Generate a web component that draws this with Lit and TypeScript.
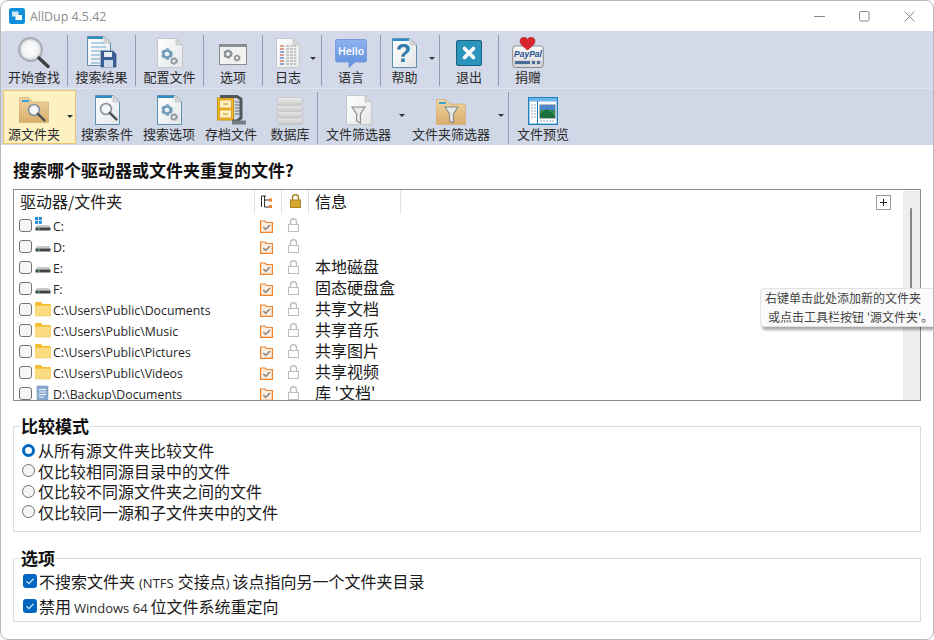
import { LitElement, html, css, svg } from "lit";
import { customElement } from "lit/decorators.js";

const gear = (x: number, y: number, r: number, c: string) => svg`
  <circle cx=${x} cy=${y} r=${r * 0.72} fill="none" stroke=${c} stroke-width=${r * 0.5}/>
  <circle cx=${x} cy=${y} r=${r} fill="none" stroke=${c} stroke-width=${r * 0.28} stroke-dasharray=${`${r * 0.6} ${r * 0.5}`}/>`;

const docBody = (w: number, h: number, top = true) => svg`
  <path d="M.5 .5H${w - 7}L${w - .5} 7V${h - .5}H.5Z" fill="url(#doc)" stroke=${top ? "#5f8fb0" : "#c8c8c8"}/>
  <path d="M${w - 7} .5V7H${w - .5}Z" fill="#d9d9d9" stroke="#bbb" stroke-width=".6"/>
  ${top ? svg`<rect x="1" y="1" width=${w - 9} height="2" fill="#2f8fc4"/>` : ""}`;

const glass = (x: number, y: number, r: number) => svg`
  <circle cx=${x} cy=${y} r=${r} fill="url(#lens)" stroke="#8a949c" stroke-width="1.6"/>
  <path d="M${x + r * .7} ${y + r * .7}L${x + r * 1.9} ${y + r * 1.9}" stroke="#4a4f55" stroke-width="2.4" stroke-linecap="round"/>`;

const folderTan = () => svg`
  <path d="M0 1.5Q0 .5 1 .5H10L14 5H29.5V25.5H0Z" fill="url(#tan)" stroke="#c9a670" stroke-width=".6"/>
  <rect x="3" y="3" width="7" height="2" fill="#3aa0d8"/>`;

const funnel = (x: number, y: number) => svg`
  <path d="M${x} ${y}H${x + 13}L${x + 8.4} ${y + 7}V${y + 16}L${x + 4.6} ${y + 14}V${y + 7}Z" fill="#e9e9e9" stroke="#8a8a86" stroke-width="1.1"/>`;

const ICONS: Record<string, any> = {
  start: html`<svg width="32" height="31" viewBox="0 0 32 31">
    <circle cx="12.5" cy="12.5" r="11.5" fill="url(#lens)" stroke="#a8adb2" stroke-width="2"/>
    <path d="M21 21L30 29.5" stroke="#3d3f42" stroke-width="3.4" stroke-linecap="round"/></svg>`,
  results: html`<svg width="30" height="32" viewBox="0 0 30 32">
    <g>${docBody(24, 30)}</g>
    <path d="M4 7H17M4 11H19M4 15H19M4 19H13M4 23H13M4 27H13" stroke="#6aa9d3" stroke-width="1.2"/>
    <path d="M14 15H26L29 18V31H14Z" fill="#3a5f96" stroke="#28446e" stroke-width=".6"/>
    <rect x="17" y="16" width="8" height="5" fill="#e9eef5"/><rect x="17" y="24" width="9" height="7" fill="#cdd9ea"/></svg>`,
  config: html`<svg width="26" height="30" viewBox="0 0 26 30">
    <g>${docBody(26, 30, false)}</g>${gear(10, 16, 5, "#6d9dbb")}${gear(17, 23, 3.4, "#8f9aa3")}</svg>`,
  options: html`<svg width="28" height="21" viewBox="0 0 28 21">
    <rect x=".5" y=".5" width="27" height="20" fill="#f1f1f1" stroke="#8c8c8c"/>
    <rect x="1" y="1" width="26" height="2" fill="#8c9096"/>${gear(9, 10, 4, "#8a8f93")}${gear(18, 14, 3, "#8a8f93")}</svg>`,
  log: html`<svg width="24" height="30" viewBox="0 0 24 30">
    <g>${docBody(24, 30, false)}</g>
    <path d="M4 8H8M4 11H8M4 17H8M4 23H8" stroke="#c8402a" stroke-width="1.2"/>
    <path d="M4 14H8M4 20H8M4 26H8" stroke="#2c5aa8" stroke-width="1.2"/>
    <path d="M10 8H20M10 11H20M10 14H20M10 17H20M10 20H20M10 23H20M10 26H20" stroke="#9a9a9a" stroke-width="1.2" stroke-dasharray="3 1"/></svg>`,
  hello: html`<svg width="32" height="29" viewBox="0 0 32 29">
    <path d="M2 .5H30Q31.500 .5 31.500 2V21Q31.500 23 30 23H20L14 28.500V23H2Q.5 23 .5 21V2Q.5 .5 2 .5Z" fill="url(#hello)" stroke="#7a9fd8"/>
    <text class="hello" x="16" y="16" text-anchor="middle">Hello</text></svg>`,
  help: html`<svg width="25" height="30" viewBox="0 0 25 30">
    <g>${docBody(25, 30)}</g><text class="qm" x="11.500" y="24" text-anchor="middle">?</text></svg>`,
  exit: html`<svg width="26" height="26" viewBox="0 0 26 26">
    <rect x=".5" y=".5" width="25" height="25" rx="1.5" fill="#2b94bd" stroke="#1b5f7e"/>
    <path d="M8.500 8.500L17.500 17.500M17.500 8.500L8.500 17.500" stroke="#fff" stroke-width="3.600" stroke-linecap="round"/></svg>`,
  paypal: html`<svg width="32" height="31" viewBox="0 0 32 31">
    <rect x=".7" y="9" width="30.600" height="21.500" rx="3" fill="url(#pp)" stroke="#8b8b8b"/>
    <rect x="2" y="23.500" width="28" height="4.500" fill="#d0d2d6"/>
    <rect x="3" y="24" width="15" height="3" fill="#4a6d96"/><rect x="20" y="24" width="3" height="3" fill="#4a6d96"/><rect x="25" y="24" width="3" height="3" fill="#4a6d96"/>
    <text class="pp" x="16" y="20" text-anchor="middle">PayPal</text>
    <path d="M14.500 13C10 9.500 7 7 7 4C7 1.500 9 .3 11 .3C12.500 .3 14 1.200 14.500 2.500C15 1.200 16.500 .3 18 .3C20 .3 22 1.500 22 4C22 7 19 9.500 14.500 13Z" fill="#d9232c" stroke="#9f1a20" stroke-width=".5" transform="translate(1 0)"/></svg>`,
  source: html`<svg width="31" height="28" viewBox="0 0 31 28">
    <g>${folderTan()}</g>${glass(15, 13, 5.500)}</svg>`,
  cond: html`<svg width="25" height="30" viewBox="0 0 25 30">
    <g>${docBody(25, 30)}</g>${glass(11, 14, 5.500)}</svg>`,
  searchopt: html`<svg width="25" height="30" viewBox="0 0 25 30">
    <g>${docBody(25, 30)}</g>${gear(10, 15, 5, "#6d9dbb")}${gear(17, 22, 3.400, "#8f9aa3")}</svg>`,
  archive: html`<svg width="29" height="31" viewBox="0 0 29 31">
    <rect x=".5" y="4" width="16" height="22" fill="#f6bf2a" stroke="#c98b10"/>
    <rect x="2.500" y="6" width="12" height="8" fill="#fdf1c4" stroke="#c98b10" stroke-width=".7"/>
    <rect x="2.500" y="16" width="12" height="8" fill="#fdf1c4" stroke="#c98b10" stroke-width=".7"/>
    <path d="M6 10H11M6 20H11" stroke="#c98b10" stroke-width="1.200"/>
    <path d="M3 2.500H20L24 5V24L20 27H15" fill="none" stroke="#50565c" stroke-width="3"/>
    <path d="M18 8H23M18 11H23M18 14H23M18 17H23M18 20H23" stroke="#6c6c6c"/>
    <rect x="15" y="26.500" width="14" height="4" fill="#777d83"/></svg>`,
  db: html`<svg width="26" height="28" viewBox="0 0 26 28">
    <g fill="url(#db)" stroke="#bfbfbf" stroke-width=".7">
      <rect x=".5" y="19.500" width="25" height="8" rx="3"/><rect x=".5" y="13" width="25" height="8" rx="3"/>
      <rect x=".5" y="6.500" width="25" height="8" rx="3"/><rect x=".5" y=".5" width="25" height="8" rx="3"/></g></svg>`,
  filefilter: html`<svg width="26" height="30" viewBox="0 0 26 30">
    <g>${docBody(26, 30, false)}</g>${funnel(6, 12)}</svg>`,
  folderfilter: html`<svg width="30" height="26" viewBox="0 0 30 26">
    <g>${folderTan()}</g>${funnel(9, 8)}</svg>`,
  preview: html`<svg width="30" height="28" viewBox="0 0 30 28">
    <rect x=".7" y=".7" width="28.600" height="26.600" fill="#fff" stroke="#1f7fc0" stroke-width="1.400"/>
    <rect x="1" y="1" width="28" height="3.500" fill="#6db7e6"/>
    <path d="M9.500 4V27" stroke="#1f7fc0"/>
    <path d="M3 8H8M3 11H8M3 14H8M3 17H8M3 20H8" stroke="#8aa7bd" stroke-dasharray="2 1"/>
    <rect x="12" y="8" width="15" height="13" fill="#2a8f4f" stroke="#777"/>
    <rect x="12" y="8" width="15" height="5" fill="#4a86c8"/>
    <path d="M12 17L19 12L27 19V21H12Z" fill="#1c6e3a"/>
    <path d="M12 24H27" stroke="#8aa7bd" stroke-dasharray="2 1"/></svg>`,
};

const driveIcon = (win = false) => html`<svg class="ri" width="16" height="18" viewBox="0 0 16 18">
  ${win ? svg`<g fill="#1e88d8"><rect x="0" y="0" width="3" height="3"/><rect x="3.800" y="0" width="3" height="3"/><rect x="0" y="3.800" width="3" height="3"/><rect x="3.800" y="3.800" width="3" height="3"/></g>` : ""}
  <path d="M2 8H14L15.500 10.500H.5Z" fill="#c9c9c9"/><rect x=".5" y="10.500" width="15" height="3" fill="#3f4448"/><rect x="3" y="11.500" width="2" height="1" fill="#5fd35f"/></svg>`;

const folderIcon = html`<svg class="ri" width="16" height="18" viewBox="0 0 16 18">
  <path d="M0 2.500Q0 1 1 1H6L7.500 3H15.500V15H0Z" fill="#f5bd2e"/><rect x="0" y="4.500" width="16" height="10.500" fill="#fbdc80" stroke="#f0c245" stroke-width=".5"/></svg>`;

const libIcon = html`<svg class="ri" width="16" height="18" viewBox="0 0 16 18">
  <rect x="2" y="1" width="11" height="14" fill="#8aa9cf" stroke="#7593b8" stroke-width=".5"/><path d="M4 4.500H11M4 7H11M4 9.500H11M4 12H9" stroke="#eef3fa"/></svg>`;

const orangeCheck = html`<svg class="oc" width="13" height="13" viewBox="0 0 13 13">
  <path d="M.6 1H5L6.500 2.500H12.400V12.400H.6Z" fill="#fbeee2" stroke="#f0822a" stroke-width="1.200"/><path d="M3.300 7L5.700 9.400L10 5" fill="none" stroke="#948a82" stroke-width="1.700"/></svg>`;

const grayLock = html`<svg class="lk" width="11" height="14" viewBox="0 0 11 14">
  <path d="M2.500 6.500V3.500Q2.500 .7 5.500 .7T8.500 3.500V6.500" fill="none" stroke="#bdbdbd" stroke-width="1.400"/><rect x=".5" y="6.500" width="10" height="7" fill="#fff" stroke="#bdbdbd"/></svg>`;

const TOP = [
  { k: "start", t: "开始查找", w: 67 },
  { k: "results", t: "搜索结果", w: 68 },
  { k: "config", t: "配置文件", w: 68 },
  { k: "options", t: "选项", w: 59, mb: 3 },
  { k: "log", t: "日志", w: 59, ar: 5, pr: 8 },
  { k: "hello", t: "语言", w: 59 },
  { k: "help", t: "帮助", w: 59, ar: 4, pr: 11 },
  { k: "exit", t: "退出", w: 59, mb: 2 },
  { k: "paypal", t: "捐赠", w: 58, nosep: true },
];
const BOTTOM = [
  { k: "source", t: "源文件夹", w: 73, active: true, ar: 2, pr: 11, nosep: true },
  { k: "cond", t: "搜索条件", w: 62, nosep: true },
  { k: "searchopt", t: "搜索选项", w: 62, nosep: true },
  { k: "archive", t: "存档文件", w: 62, nosep: true },
  { k: "db", t: "数据库", w: 56 },
  { k: "filefilter", t: "文件筛选器", w: 92, ar: 5, pr: 11, nosep: true },
  { k: "folderfilter", t: "文件夹筛选器", w: 99, ar: 5, pr: 17 },
  { k: "preview", t: "文件预览", w: 68, nosep: true },
];
const ROWS = [
  { p: "C:", i: driveIcon(true), n: "" },
  { p: "D:", i: driveIcon(), n: "" },
  { p: "E:", i: driveIcon(), n: "本地磁盘" },
  { p: "F:", i: driveIcon(), n: "固态硬盘盒" },
  { p: "C:\\Users\\Public\\Documents", i: folderIcon, n: "共享文档" },
  { p: "C:\\Users\\Public\\Music", i: folderIcon, n: "共享音乐" },
  { p: "C:\\Users\\Public\\Pictures", i: folderIcon, n: "共享图片" },
  { p: "C:\\Users\\Public\\Videos", i: folderIcon, n: "共享视频" },
  { p: "D:\\Backup\\Documents", i: libIcon, n: "库 '文档'" },
];
const MODES = ["从所有源文件夹比较文件", "仅比较相同源目录中的文件", "仅比较不同源文件夹之间的文件", "仅比较同一源和子文件夹中的文件"];

@customElement("app-root")
export class AppRoot extends LitElement {
  static styles = css`
    :host { display: block; width: 934px; height: 640px; background: #fff; font-family: "Noto Sans CJK SC", "Noto Sans", sans-serif; color: #1a1a1a; overflow: hidden; }
    .win { position: relative; box-sizing: border-box; width: 934px; height: 640px; border: 1px solid #b9b9b9; border-radius: 8px; background: #fff; overflow: hidden; display: flex; flex-direction: column; }
    .defs { position: absolute; width: 0; height: 0; }
    .title { height: 30px; flex: none; display: flex; align-items: center; padding-left: 8px; }
    .logo { flex: none; margin-right: 5px; }
    .title span { font: 12.400px "Open Sans", sans-serif; color: #8b8b8b; flex: 1; }
    .ctl { display: flex; margin-right: 1px; }
    .ctl svg { display: block; }
    .ctl div { width: 45px; height: 30px; display: flex; align-items: center; justify-content: center; }
    .bar { display: flex; flex: none; background: #d3d9e8; }
    .bar1 { height: 57px; padding-top: 4px; box-sizing: border-box; }
    .bar2 { height: 57px; background: #d0d7e6; border-top: 1px solid #dfe3ee; box-sizing: border-box; padding: 1px 0 1px 2px; }
    .btn { position: relative; box-sizing: border-box; display: flex; flex-direction: column; align-items: center; flex: none; }
    .bar1 .btn { height: 51px; }
    .bar2 .btn { height: 54px; }
    .bar1 .btn.sep { border-right: 1px solid #939aad; }
    .bar2 .btn.sep::after { content: ""; position: absolute; right: 0; top: 2px; bottom: 0; width: 1px; background: #939aad; }
    .btn.active { background: #fdf1c2; border: 1px solid #ecc66e; }
    .ico { display: flex; align-items: flex-end; justify-content: center; }
    .bar1 .ico { height: 33px; }
    .bar2 .ico { height: 35px; }
    .bar2 .active .ico { height: 34px; }
    .ico svg { display: block; }
    .lbl { font-size: 13px; line-height: 18px; color: #2b2b2b; white-space: nowrap; }
    .arrow { position: absolute; width: 0; height: 0; border: 3px solid transparent; border-top: 3.500px solid #2f343c; border-bottom: 0; }
    .bar1 .arrow { top: 22px; }
    .bar2 .arrow { top: 24px; }
    .hello { font: 10.500px "Open Sans", sans-serif; fill: #fff; font-weight: 600; }
    .qm { font: 700 25px "Liberation Sans", sans-serif; fill: #2f7ca8; }
    .pp { font: italic 700 8.500px "Liberation Sans", sans-serif; fill: #1d4f91; }

    .main { flex: 1; padding: 0 12px; display: flex; flex-direction: column; }
    h1 { margin: 14px 0 8px; font-size: 17px; line-height: 22px; font-weight: 700; color: #111; }
    .table { box-sizing: border-box; position: relative; width: 908px; height: 212px; border: 1px solid #8c8c90; overflow: hidden; }
    .row, .head { display: grid; grid-template-columns: 241px 27px 27px 92px; align-items: start; }
    .head { height: 26px; }
    .head > div { height: 24px; display: flex; align-items: center; box-sizing: border-box; border-right: 1px solid #e2e2e2; font-size: 16px; padding-bottom: 2px; }
    .head .n { padding-left: 6px; color: #222; }
    .head .inf { padding-left: 6px; }
    .head .c { justify-content: center; }
    .head .tree { padding-right: 4px; }
    .row { height: 21px; }
    .cell { display: flex; align-items: center; height: 21px; box-sizing: border-box; }
    .path { padding-left: 5px; font: 12.300px "Open Sans", sans-serif; gap: 3px; color: #1f1f1f; white-space: nowrap; }
    .cb { flex: none; box-sizing: border-box; width: 13px; height: 13px; margin-top: -2px; border: 1px solid #737373; border-radius: 3px; background: #f6f6f6; }
    .ri { flex: none; display: block; margin: -2px -1px 0 0; }
    .ctr { justify-content: center; }
    .c2 { padding-right: 5px; }
    .c3 { padding-right: 4px; }
    .inf { padding-left: 6px; font-size: 16px; white-space: nowrap; }
    .row .inf { padding-bottom: 4px; height: 21px; line-height: 15px; }
    .oc, .lk { display: block; }
    .lk { margin-top: -3px; }
    .plus { position: absolute; right: 29px; top: 5px; box-sizing: border-box; width: 15px; height: 15px; border: 1px solid #9a9a9a; background: #fff; }
    .plus svg { display: block; }
    .scroll { position: absolute; right: 0; top: 1px; bottom: 0; width: 17px; background: #eeeeee; }
    .thumb { position: absolute; left: 7px; top: 17px; width: 2px; height: 100px; background: #858585; border-radius: 1px; }
    .tip { position: absolute; left: 759px; top: 287px; box-sizing: border-box; width: 180px; height: 39px; padding: 0 0 0 4px; background: #fafafa; border: 1px solid #e2e2e2; border-radius: 4px; box-shadow: 2px 3px 3px rgba(0,0,0,.35); font-size: 12px; line-height: 19px; color: #444; white-space: nowrap; }
    .tip div + div { padding-left: 3px; }
    .tip div:first-child { margin-top: -1px; }

    fieldset { width: 908px; box-sizing: border-box; margin: 0; padding: 0 0 0 8px; border: 1px solid #dcdcdc; }
    legend { padding: 0; font-size: 17px; line-height: 20px; font-weight: 700; color: #111; margin-left: -1px; }
    .g1 { margin-top: 15px; height: 116px; }
    .g2 { margin-top: 16px; height: 74px; padding-left: 9px; }
    .g2 legend { margin-left: -2px; }
    .opt { display: flex; align-items: center; gap: 3px; font-size: 16px; white-space: nowrap; color: #1a1a1a; }
    .g1 .opt { height: 20.500px; }
    .g1 .opts { padding-top: 4px; }
    .g2 .opts { padding-top: 1px; }
    .g2 .opt { height: 24.500px; gap: 2px; }
    .rd { flex: none; box-sizing: border-box; width: 13px; height: 13px; border-radius: 50%; border: 1px solid #6f6f6f; background: #f5f5f5; }
    .rd.on { border: 3.500px solid #0067c0; background: #fff; }
    .ck { flex: none; display: block; }
    .lat { font: 13px "Open Sans", sans-serif; color: #2a2a2a; margin: 0 4px; }
    .lat.cl { margin: 0 3px 0 0; }
    .lat.win64 { margin: 0 3px; }
  `;

  private tool(b: any) {
    const cls = `btn ${b.nosep ? "" : "sep"} ${b.active ? "active" : ""}`;
    const pr = b.pr ? `padding-right:${b.pr}px` : "";
    const mb = b.mb ? `padding-bottom:${b.mb}px;box-sizing:border-box` : "";
    return html`<div class=${cls} style="width:${b.w}px;${pr}">
      <div class="ico" style=${mb}>${ICONS[b.k]}</div><div class="lbl">${b.t}</div>
      ${b.ar !== undefined ? html`<i class="arrow" style="right:${b.ar}px"></i>` : ""}
    </div>`;
  }

  render() {
    const ck = html`<svg class="ck" width="14" height="14" viewBox="0 0 14 14"><rect width="14" height="14" rx="3" fill="#0067c0"/><path d="M3.500 7.200L6 9.600L10.500 4.800" fill="none" stroke="#cfe3f5" stroke-width="1.300"/></svg>`;
    return html`<div class="win">
      <svg class="defs"><defs>
        <linearGradient id="doc" x1="0" y1="0" x2="1" y2="1"><stop offset="0" stop-color="#fff"/><stop offset="1" stop-color="#e4e6e8"/></linearGradient>
        <radialGradient id="lens" cx=".5" cy=".5" r=".5"><stop offset="0" stop-color="#fff"/><stop offset=".7" stop-color="#f0f2f4"/><stop offset="1" stop-color="#c4cad0"/></radialGradient>
        <linearGradient id="tan" x1="0" y1="0" x2="0" y2="1"><stop offset="0" stop-color="#efd3a0"/><stop offset="1" stop-color="#d8ad6c"/></linearGradient>
        <linearGradient id="hello" x1="0" y1="0" x2="0" y2="1"><stop offset="0" stop-color="#8db2ee"/><stop offset="1" stop-color="#5f8ee0"/></linearGradient>
        <linearGradient id="pp" x1="0" y1="0" x2="0" y2="1"><stop offset="0" stop-color="#fbfbfb"/><stop offset="1" stop-color="#d8d8d8"/></linearGradient>
        <linearGradient id="db" x1="0" y1="0" x2="0" y2="1"><stop offset="0" stop-color="#f0f0f0"/><stop offset="1" stop-color="#c8c8c8"/></linearGradient>
      </defs></svg>

      <div class="title">
        <svg class="logo" width="16" height="16" viewBox="0 0 16 16"><rect width="16" height="16" rx="2.500" fill="#0f8fdc"/><rect x="3" y="3.500" width="6.500" height="5" fill="#cfe9fa"/><rect x="6.500" y="7" width="6.500" height="5" fill="#fff"/></svg>
        <span>AllDup 4.5.42</span>
        <div class="ctl">
          <div><svg width="11" height="11" viewBox="0 0 11 11"><path d="M0 5.500H11" stroke="#8a8a8a"/></svg></div>
          <div><svg width="11" height="11" viewBox="0 0 11 11"><rect x=".5" y=".5" width="9.500" height="9.500" rx="1.500" fill="none" stroke="#8a8a8a"/></svg></div>
          <div><svg width="11" height="11" viewBox="0 0 11 11"><path d="M.5 .5L10.500 10.500M10.500 .5L.5 10.500" stroke="#8a8a8a"/></svg></div>
        </div>
      </div>

      <div class="bar bar1">${TOP.map((b) => this.tool(b))}</div>
      <div class="bar bar2">${BOTTOM.map((b) => this.tool(b))}</div>

      <div class="main">
        <h1>搜索哪个驱动器或文件夹重复的文件?</h1>
        <div class="table">
          <div class="head">
            <div class="n">驱动器/文件夹</div>
            <div class="c tree"><svg width="13" height="13" viewBox="0 0 13 13"><path d="M1.500 1V12M1.500 1H6M4.500 1V12H9M4.500 5H9" fill="none" stroke="#333"/><rect x="9" y="3.500" width="3" height="3" fill="#e8842a"/><rect x="9" y="10" width="3" height="3" fill="#e8842a"/></svg></div>
            <div class="c"><svg width="11" height="14" viewBox="0 0 11 14"><path d="M2.500 6.500V3.500Q2.500 .8 5.500 .8T8.500 3.500V6.500" fill="none" stroke="#a88524" stroke-width="1.500"/><rect x=".5" y="6" width="10" height="7.500" fill="#d9a92f" stroke="#a88524"/></svg></div>
            <div class="inf">信息</div>
          </div>
          ${ROWS.map((r) => html`<div class="row">
            <div class="cell path"><span class="cb"></span>${r.i}<span>${r.p}</span></div>
            <div class="cell ctr c2">${orangeCheck}</div>
            <div class="cell ctr c3">${grayLock}</div>
            <div class="cell inf">${r.n}</div>
          </div>`)}
          <div class="plus"><svg width="13" height="13" viewBox="0 0 13 13"><path d="M3 6.500H10M6.500 3V10" stroke="#222"/></svg></div>
          <div class="scroll"><div class="thumb"></div></div>
        </div>

        <fieldset class="g1">
          <legend>比较模式</legend>
          <div class="opts">${MODES.map((m, i) => html`<div class="opt"><span class="rd ${i === 0 ? "on" : ""}"></span>${m}</div>`)}</div>
        </fieldset>
        <fieldset class="g2">
          <legend>选项</legend>
          <div class="opts">
            <div class="opt">${ck}<span>不搜索文件夹<span class="lat">(NTFS</span>交接点<span class="lat cl">)</span>该点指向另一个文件夹目录</span></div>
            <div class="opt">${ck}<span>禁用<span class="lat win64">Windows 64</span>位文件系统重定向</span></div>
          </div>
        </fieldset>
      </div>

      <div class="tip"><div>右键单击此处添加新的文件夹</div><div>或点击工具栏按钮 '源文件夹'。</div></div>
    </div>`;
  }
}
